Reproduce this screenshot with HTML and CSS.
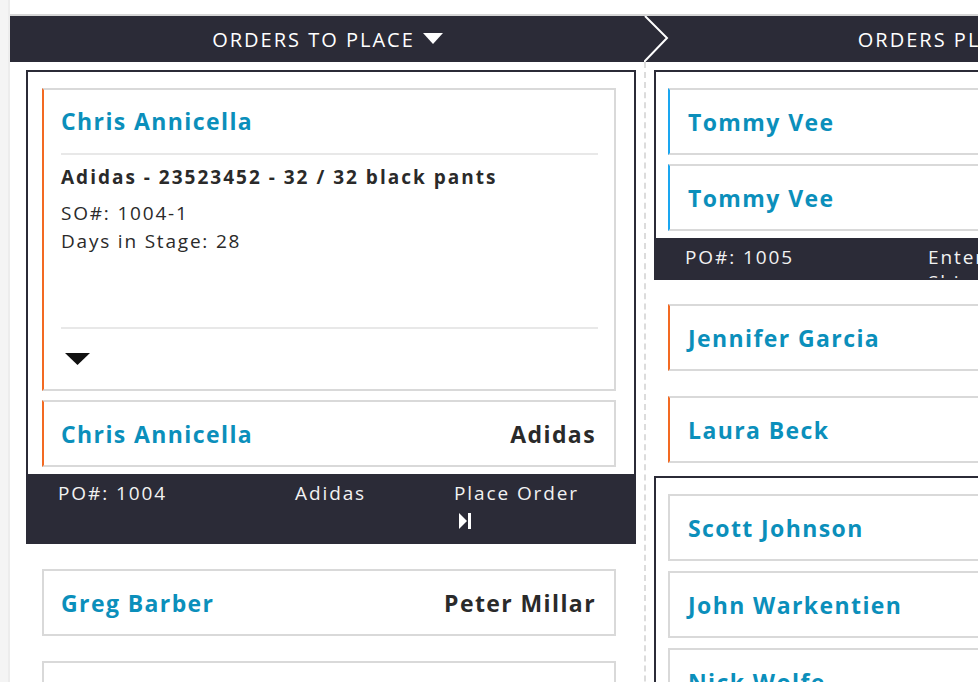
FILE: index.html
```html
<!DOCTYPE html>
<html lang="en">
<head>
<meta charset="utf-8">
<title>Orders</title>
<link rel="stylesheet" href="styles.css">
</head>
<body>
<div class="app">
  <div class="stage-bar">
    <div class="stage-title">ORDERS TO PLACE
      <svg class="caret" width="20" height="11" viewBox="0 0 20 11"><path d="M0 0H20L10 11Z" fill="#fff"/></svg>
    </div>
    <div class="stage-title stage-title--next">
      <svg class="chev" width="26" height="46" viewBox="0 0 26 46"><path d="M1 0L23 22L0 46" fill="none" stroke="#fff" stroke-width="2"/></svg>
      ORDERS PLACED
      <svg class="caret" width="20" height="11" viewBox="0 0 20 11"><path d="M0 0H20L10 11Z" fill="#fff"/></svg>
    </div>
  </div>

  <div class="board">
    <div class="col">
      <div class="group">
        <div class="group-body">
          <div class="card card--orange card--open">
            <div class="card-name">Chris Annicella</div>
            <div class="card-detail">
              <div class="item-title">Adidas - 23523452 - 32 / 32 black pants</div>
              <div class="item-line">SO#: 1004-1</div>
              <div class="item-line">Days in Stage: 28</div>
            </div>
            <div class="card-toggle">
              <svg width="25" height="12" viewBox="0 0 25 12"><path d="M0 0H25L12.5 12Z" fill="#111"/></svg>
            </div>
          </div>
          <div class="card card--orange card--row">
            <span class="card-name">Chris Annicella</span>
            <span class="card-brand">Adidas</span>
          </div>
        </div>
        <div class="group-foot">
          <span class="foot-po">PO#: 1004</span>
          <span class="foot-brand">Adidas</span>
          <span class="foot-action">Place Order
            <svg class="skip" width="13" height="16" viewBox="0 0 13 16"><path d="M0 0L8 8L0 16Z" fill="#fff"/><rect x="9" y="0" width="3" height="16" fill="#fff"/></svg>
          </span>
        </div>
      </div>

      <div class="card card--row card--loose">
        <span class="card-name">Greg Barber</span>
        <span class="card-brand">Peter Millar</span>
      </div>
      <div class="card card--row card--loose">
        <span class="card-name">Jordan Price</span>
        <span class="card-brand">Bonobos</span>
      </div>
    </div>

    <div class="col col--right">
      <div class="group">
        <div class="group-body">
          <div class="card card--blue card--row">
            <span class="card-name">Tommy Vee</span>
          </div>
          <div class="card card--blue card--row">
            <span class="card-name">Tommy Vee</span>
          </div>
        </div>
        <div class="group-foot group-foot--short">
          <span class="foot-po">PO#: 1005</span>
          <span class="foot-action foot-action--wrap">Enter Ship Info</span>
        </div>
      </div>

      <div class="card card--orange card--row card--loose">
        <span class="card-name">Jennifer Garcia</span>
      </div>
      <div class="card card--orange card--row card--loose">
        <span class="card-name">Laura Beck</span>
      </div>

      <div class="group group--tight">
        <div class="group-body">
          <div class="card card--row">
            <span class="card-name">Scott Johnson</span>
          </div>
          <div class="card card--row">
            <span class="card-name">John Warkentien</span>
          </div>
          <div class="card card--row">
            <span class="card-name">Nick Wolfe</span>
          </div>
        </div>
      </div>
    </div>
  </div>
</div>
</body>
</html>
```

FILE: styles.css
```css
* { box-sizing: border-box; }

html, body {
  margin: 0;
  padding: 0;
  height: 100%;
  overflow: hidden;
}

body {
  background: #f4f4f4;
  font-family: "Open Sans", "Liberation Sans", sans-serif;
  color: #2a2a2a;
}

.app {
  margin-left: 8px;
  border-left: 2px solid #ececec;
  background: #fff;
  min-height: 100%;
  padding-top: 14px;
  width: 1400px;
}

.stage-bar {
  display: flex;
  border-top: 2px solid #d6d6d6;
  background: #2b2b37;
  height: 48px;
}

.stage-title {
  flex: 0 0 635px;
  position: relative;
  display: flex;
  align-items: center;
  justify-content: center;
  gap: 8px;
  color: #fff;
  font-size: 20px;
  letter-spacing: 2px;
  padding-top: 1px;
}

.caret { margin-top: -2px; }

.chev {
  position: absolute;
  left: -1px;
  top: 0;
}

.board {
  display: flex;
  align-items: flex-start;
  padding-left: 8px;
}

.col {
  flex: 0 0 628px;
  padding: 8px 8px 0 8px;
  border-right: 2px dashed #dcdcdc;
  min-height: 700px;
}

.col--right { border-right: 0; flex-basis: 700px; }

.group {
  border: 2px solid #2b2b37;
  background: #fff;
}

.group-body {
  display: flex;
  flex-direction: column;
  gap: 9px;
  padding: 16px 18px 7px 14px;
}

.col--right .group-body { padding-left: 12px; }

.card {
  border: 2px solid #d9d9d9;
  background: #fff;
}

.card--orange { border-left-color: #f36a22; }
.card--blue { border-left-color: #1aa6f0; }

.card--row {
  height: 67px;
  display: flex;
  align-items: center;
  justify-content: space-between;
  padding: 0 18px 0 17px;
}

.col--right .card--row { padding-left: 18px; }

.card-name {
  color: #0b8fbb;
  font-weight: 700;
  font-size: 23px;
  letter-spacing: 1.4px;
}

.card-brand {
  color: #2a2a2a;
  font-weight: 700;
  font-size: 23px;
  letter-spacing: 1.4px;
}

.card--open {
  padding: 16px 16px 0 17px;
  height: 303px;
}

.card--open .card-name {
  line-height: 30px;
  padding-bottom: 17px;
  border-bottom: 2px solid #e8e8e8;
}

.card-detail {
  padding-top: 8px;
  height: 174px;
  border-bottom: 2px solid #e8e8e8;
}

.item-title {
  font-weight: 700;
  font-size: 19px;
  letter-spacing: 2px;
  line-height: 28px;
  margin-bottom: 8px;
}

.item-line {
  font-size: 19px;
  letter-spacing: 1.8px;
  line-height: 28px;
}

.card-toggle {
  padding: 24px 0 0 4px;
  line-height: 0;
}

.group-foot {
  background: #2b2b37;
  color: #f2f2f2;
  font-size: 19px;
  letter-spacing: 1.9px;
  line-height: 22px;
  height: 68px;
  padding: 8px 0 0 30px;
  display: flex;
  align-items: flex-start;
}

.foot-po { flex: 0 0 237px; }
.foot-brand { flex: 0 0 159px; }

.foot-action {
  display: flex;
  flex-direction: column;
  align-items: flex-start;
  gap: 9px;
}

.skip { margin-left: 5px; }

.group-foot--short {
  height: 40px;
  overflow: hidden;
  padding-left: 29px;
}

.group-foot--short .foot-po { flex: 0 0 243px; }

.foot-action--wrap {
  display: block;
  width: 70px;
  line-height: 25px;
  margin-top: -1px;
}

.card--loose {
  margin: 25px 20px 0 16px;
}

.col--right .card--loose { margin-left: 14px; margin-right: 0; margin-top: 24px; }
.col--right .card--loose + .card--loose { margin-top: 25px; }

.col--right .group--tight { margin-top: 13px; }
.group--tight .group-body { gap: 10px; }
```
